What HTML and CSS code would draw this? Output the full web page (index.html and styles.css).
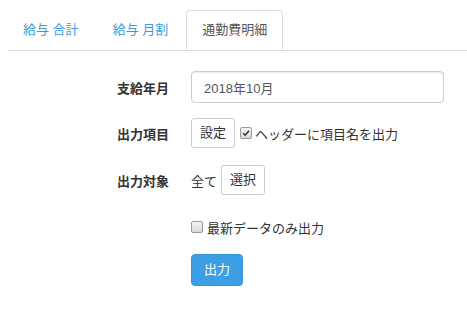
FILE: index.html
```html
<!DOCTYPE html>
<html lang="ja">
<head>
<meta charset="utf-8">
<title>出力</title>
<link rel="stylesheet" href="styles.css">
</head>
<body>
<div class="page">
  <ul class="tabs">
    <li class="tab"><a>給与 合計</a></li>
    <li class="tab"><a>給与 月割</a></li>
    <li class="tab active"><a>通勤費明細</a></li>
  </ul>
  <form class="form">
    <div class="row row-month">
      <label class="label">支給年月</label>
      <input class="input" type="text" value="2018年10月">
    </div>
    <div class="row row-items">
      <label class="label">出力項目</label>
      <button type="button" class="btn">設定</button>
      <span class="check checked"><svg viewBox="0 0 12 12" width="12" height="12"><path d="M2.6 6.2 L5 8.6 L9.6 3.2" fill="none" stroke="#333" stroke-width="1.8"/></svg></span>
      <span class="check-text">ヘッダーに項目名を出力</span>
    </div>
    <div class="row row-target">
      <label class="label">出力対象</label>
      <span class="all">全て</span>
      <button type="button" class="btn">選択</button>
    </div>
    <div class="row row-latest">
      <span class="label"></span>
      <span class="check"></span>
      <span class="check-text">最新データのみ出力</span>
    </div>
    <div class="row row-submit">
      <span class="label"></span>
      <button type="button" class="btn btn-primary">出力</button>
    </div>
  </form>
</div>
</body>
</html>
```
FILE: styles.css
```css
html, body {
  margin: 0;
  padding: 0;
  background: #fff;
}
body {
  font-family: "Liberation Sans", "Noto Sans CJK JP", sans-serif;
  font-size: 13px;
  color: #333;
}
.page {
  padding: 10px 0 0 7px;
}
.tabs {
  list-style: none;
  margin: 0;
  padding: 0;
  display: flex;
  border-bottom: 1px solid #ddd;
  height: 40px;
}
.tab {
  margin-right: 2px;
  margin-bottom: -1px;
}
.tab a {
  display: block;
  height: 38px;
  line-height: 38px;
  padding: 0 15px;
  border: 1px solid transparent;
  border-radius: 4px 4px 0 0;
  color: #3a9be0;
  white-space: pre;
}
.tab.active a {
  color: #555;
  background: #fff;
  border-color: #ddd;
  border-bottom-color: #fff;
}
.form {
  margin-top: 20px;
  margin-left: -7px;
}
.row {
  display: flex;
  align-items: center;
}
.label {
  width: 169px;
  margin-right: 22px;
  text-align: right;
  font-weight: bold;
  flex: none;
}
.row-month {
  height: 32px;
  margin-bottom: 15px;
}
.row-items {
  height: 30px;
  margin-bottom: 17px;
}
.row-target {
  height: 30px;
  margin-bottom: 22px;
}
.row-latest {
  height: 20px;
  margin-bottom: 17px;
}
.row-submit {
  height: 32px;
}
.input {
  box-sizing: border-box;
  width: 253px;
  height: 32px;
  padding: 0 12px;
  border: 1px solid #ccc;
  border-radius: 4px;
  font: inherit;
  font-size: 13px;
  color: #555;
  box-shadow: inset 0 1px 1px rgba(0,0,0,0.075);
}
.btn {
  box-sizing: border-box;
  height: 30px;
  padding: 0 8px;
  border: 1px solid #ccc;
  border-radius: 3px;
  background: #fff;
  font: inherit;
  font-size: 13px;
  color: #333;
  line-height: 28px;
}
.btn-primary {
  height: 32px;
  padding: 0 12px;
  background: #3c9ee5;
  border-color: #3594d8;
  color: #fff;
  border-radius: 4px;
}
.check {
  box-sizing: border-box;
  width: 12px;
  height: 12px;
  border: 1px solid #9a9a9a;
  border-radius: 2px;
  background: linear-gradient(#f4f4f4, #d9d9d9);
  display: inline-flex;
  align-items: center;
  justify-content: center;
  flex: none;
}
.check svg {
  width: 10px;
  height: 10px;
}
.row-items .check {
  margin-left: 5px;
  margin-right: 3px;
}
.row-latest .check {
  margin-right: 4px;
}
.all {
  margin-right: 4px;
}
```
